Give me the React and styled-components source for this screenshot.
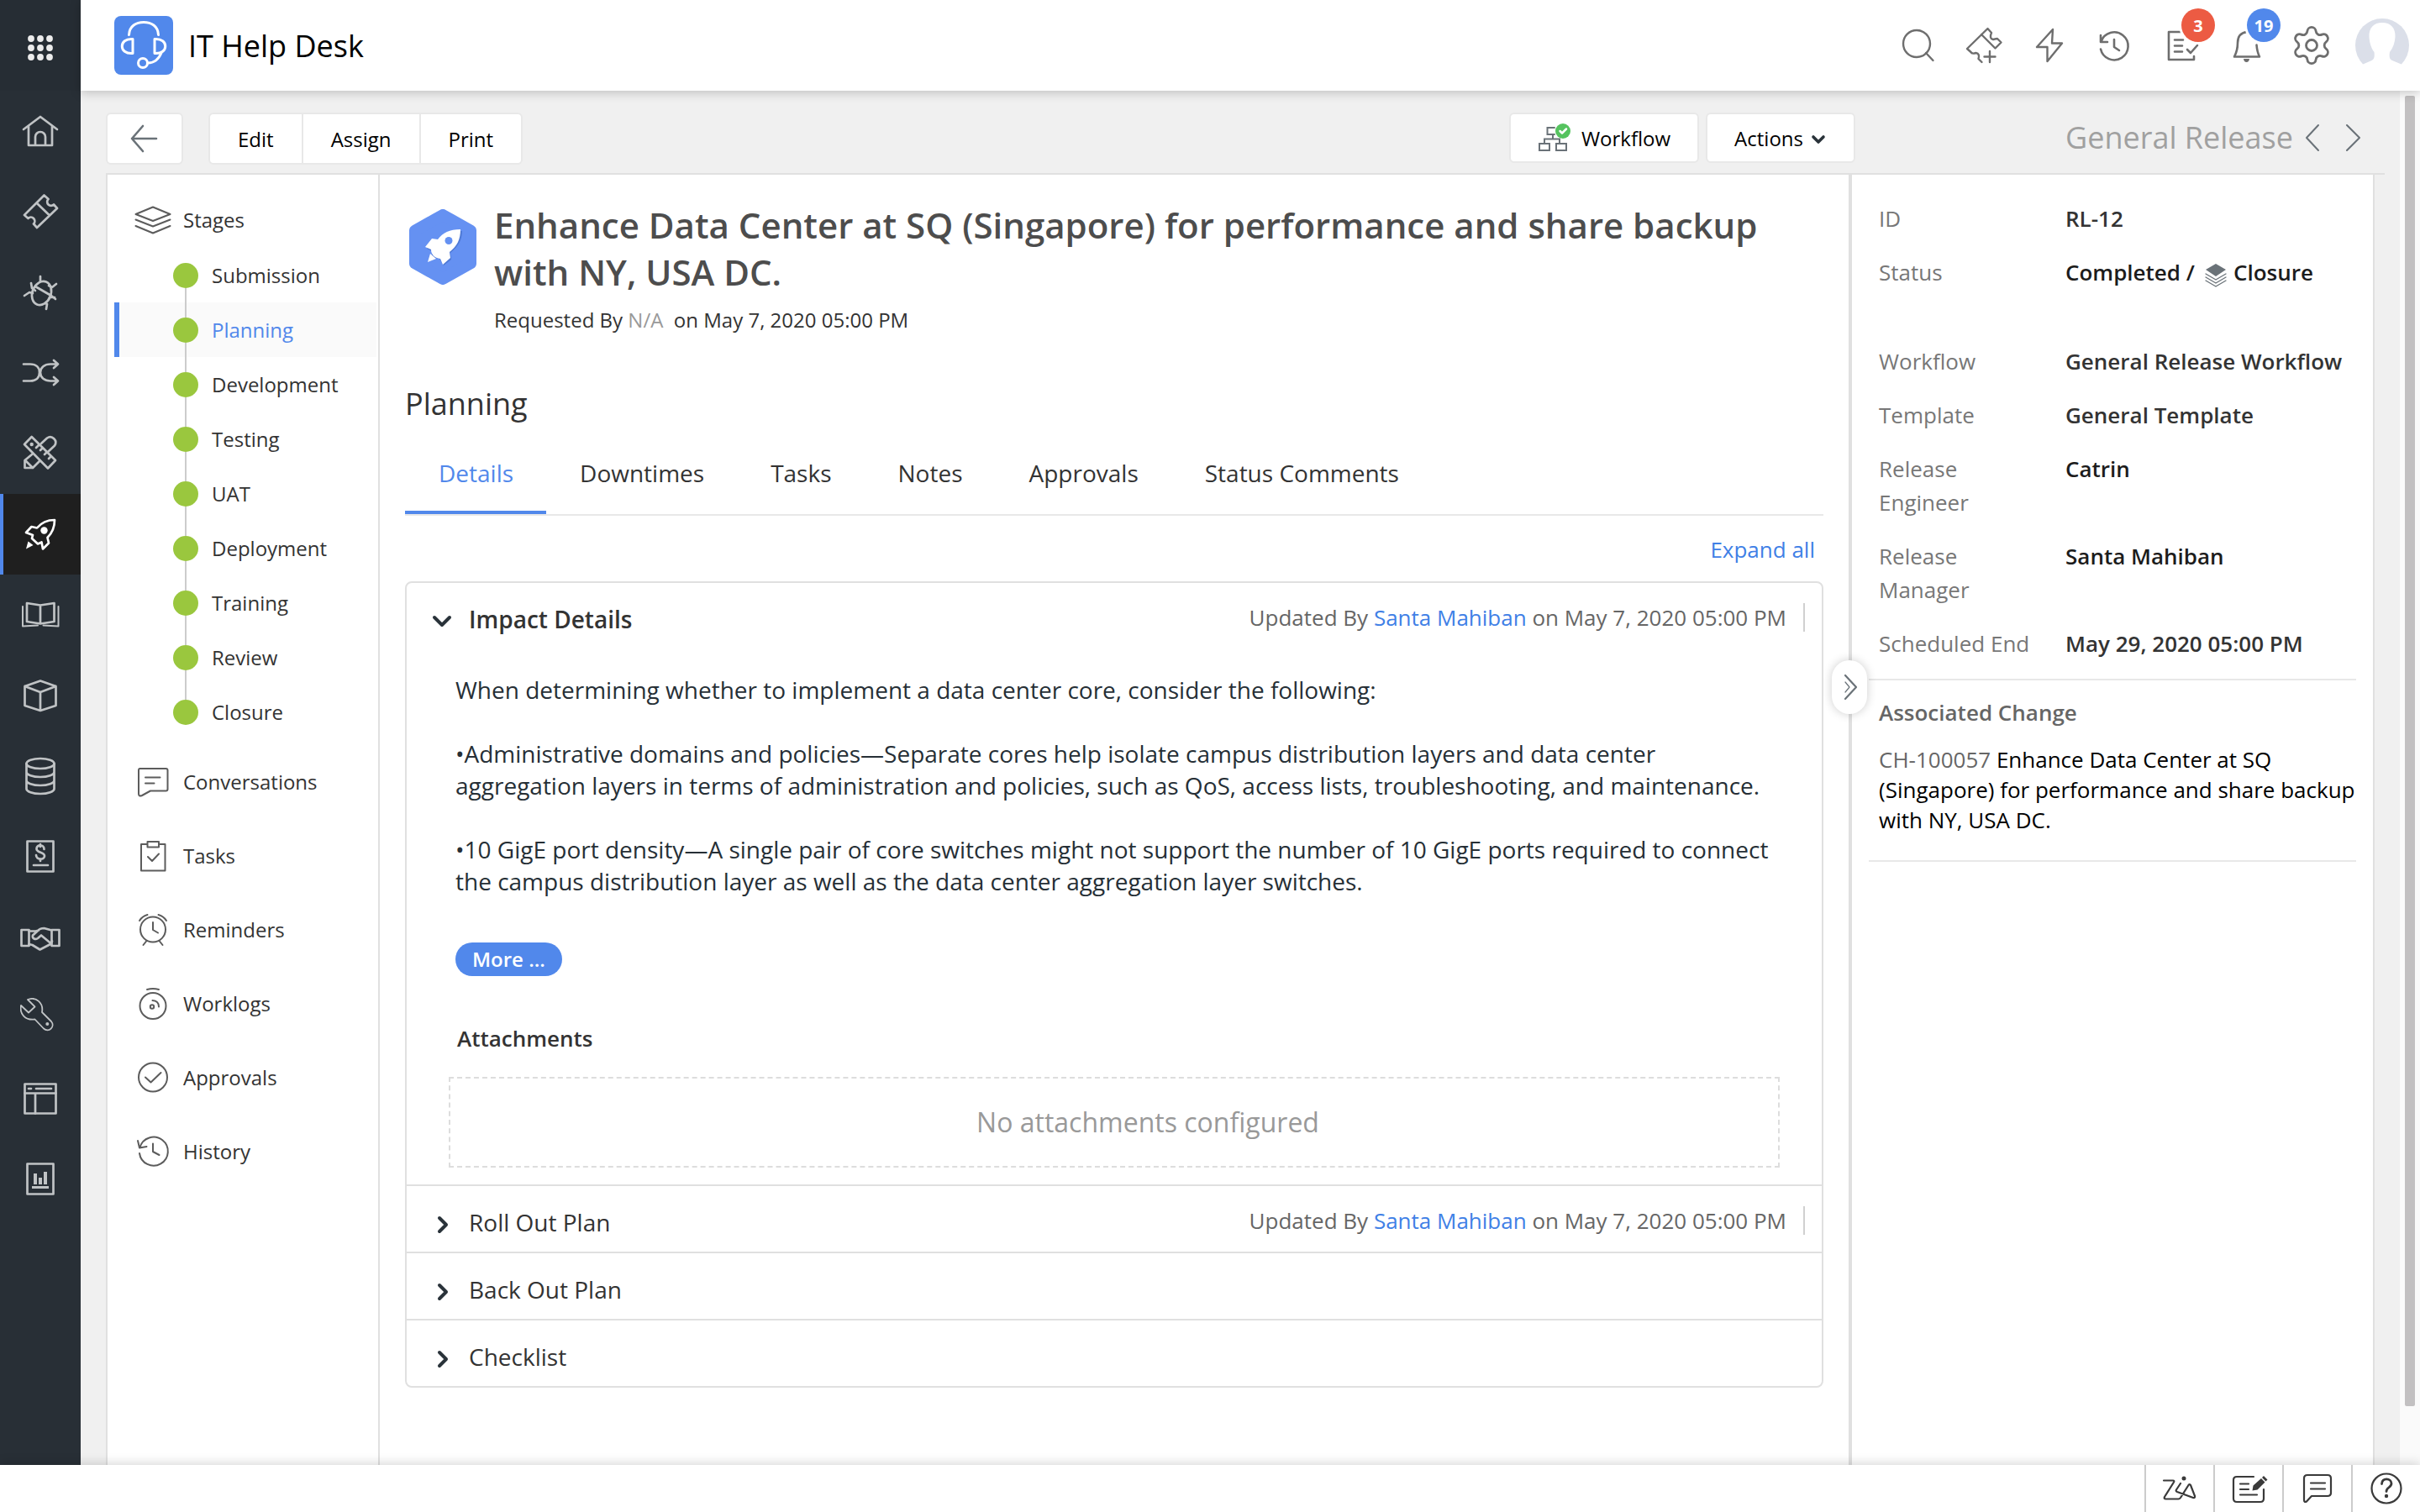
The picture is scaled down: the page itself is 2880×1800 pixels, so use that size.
import React from 'react';
import styled, { createGlobalStyle } from 'styled-components';
import { Settings } from 'lucide-react';

const GlobalStyle = createGlobalStyle`
  * {
    box-sizing: border-box;
  }

  body {
    margin: 0;
    background: #f0f0f0;
    color: #333;
    font-family: 'Open Sans', 'Noto Sans', sans-serif;
    font-size: 24px;
  }

  h1, h2, h3, p, ul, dl, dd {
    margin: 0;
    padding: 0;
  }

  ul {
    list-style: none;
  }

  a {
    color: inherit;
    text-decoration: none;
  }

  button {
    margin: 0;
    padding: 0;
    border: 0;
    background: none;
    color: inherit;
    font: inherit;
    cursor: pointer;
  }
`;

const Page = styled.div`
  display: flex;
  flex-direction: column;
  min-height: 100vh;
`;

const Body = styled.div`
  flex: 1;
  display: flex;
`;

const Svg = styled.svg`
  display: block;
  flex: none;
  fill: none;
  stroke: currentColor;
  stroke-width: ${props => props.$weight || 2};
  stroke-linecap: round;
  stroke-linejoin: round;

  .solid {
    fill: currentColor;
    stroke: none;
  }
`;

const Icon = ({ w = 48, h = 48, weight, children }) => (
  <Svg width={w} height={h} viewBox={`0 0 ${w} ${h}`} $weight={weight} aria-hidden="true">
    {children}
  </Svg>
);

/* left rail */

const Rail = styled.nav`
  width: 96px;
  flex: none;
  background: #282f36;
`;

const AppsButton = styled.button`
  display: flex;
  align-items: center;
  justify-content: center;
  width: 100%;
  height: 108px;
  padding-top: 6px;
  background: #262d34;
  color: #ececec;
`;

const RailLink = styled.a`
  display: flex;
  align-items: center;
  justify-content: center;
  height: 96px;
  color: ${props => (props.$active ? '#fff' : '#c0c3c5')};
  background: ${props => (props.$active ? '#1f1f1f' : 'transparent')};
  box-shadow: ${props => (props.$active ? 'inset 4px 0 0 #5188eb' : 'none')};
`;

const railIcons = [
  {
    label: 'Home',
    art: <path d="M4 22L24 7l20 15M10 18v23h28V18M18 41V31a6 6 0 0 1 12 0v10" />
  },
  {
    label: 'Requests',
    art: (
      <path d="M28.5 4.5L5 28l4.5 4a4.5 4.5 0 0 1 6.5 6.5l4 4.5 24-23-4-4.5a4.5 4.5 0 0 1-6.5-6.5zM20 14l14.500 14" />
    )
  },
  {
    label: 'Problems',
    art: (
      <>
        <ellipse cx="25.500" cy="25" rx="11" ry="14.500" transform="rotate(22 25.5 25)" />
        <path d="M18 17l19 11M24 5v6M13 13l1 6 4 3M5 28l6-4 4 1M43 14l-5 4-4-2M41 30h-6M42 32l-5-4M31 44l1-6-2-1" />
      </>
    )
  },
  {
    label: 'Changes',
    art: (
      <path d="M4 13.500h8c7 0 11 4 11 10s-4 10-11 10H4M45 13.500h-9c-7 0-12 4-12 10s5 10 12 10h9M40 9l5 4.500-5 4.500M40 29l5 4.500-5 4.500" />
    )
  },
  {
    label: 'Projects',
    art: (
      <>
        <path d="M13.700 4L5 13l28 28.500 9-9.500zM24 20l3-3M29 25l3-3M34 30l3-3M19 17l3-3" />
        <path d="M25 12l7-6.500c6-4 13 3 9 9L33 22M14 25L5.500 32v9H15l8-8M6 32l9 9" />
        <circle className="solid" cx="13.700" cy="13" r="2.200" />
      </>
    )
  },
  {
    label: 'Releases',
    active: true,
    art: (
      <>
        <path d="M41 7c-9 0-16 3.500-21 9.500l-6.500-1.500-6.500 7 8 3-1 4 7 6.500 4.500-2 1.500 8 7-7-1.500-6.500C38 22.500 41 16 41 7z" />
        <circle className="solid" cx="28.500" cy="19.500" r="4.200" />
        <path className="solid" d="M9.500 32.500l6 4.500-8.500 4.500z" />
      </>
    )
  },
  {
    label: 'Solutions',
    art: (
      <>
        <path d="M8 10l16 2.500L40.500 10v22L24 34.500 8 32zM24 12.500v22" />
        <path strokeWidth="2" d="M3 14v23.500l18-1M45.500 14v23.500l-18-1" />
      </>
    )
  },
  {
    label: 'Assets',
    art: <path d="M24 6.500L5.500 13v23L24 42l18.500-6V13zM5.500 13L24 20l18.500-7M24 20v22" />
  },
  {
    label: 'CMDB',
    art: (
      <>
        <ellipse cx="24" cy="9" rx="16.500" ry="6" />
        <path d="M7.500 9v30c0 3.300 7.400 6 16.500 6s16.500-2.700 16.500-6V9M7.500 19c0 3.300 7.400 6 16.500 6s16.500-2.700 16.500-6M7.500 29c0 3.300 7.400 6 16.500 6s16.500-2.700 16.500-6" />
      </>
    )
  },
  {
    label: 'Purchase',
    art: (
      <>
        <rect x="8.500" y="5.500" width="31" height="36" />
        <path d="M28.500 15c0-6-9-6-9-.5 0 5 9.500 3.500 9.500 8.500s-10 5-10-1M24 9v3M24 26.500v2.500M16 34h17" />
      </>
    )
  },
  {
    label: 'Contracts',
    art: (
      <>
        <path d="M1.500 15h9v19h-9zM37.500 15h9v19h-9z" />
        <path d="M10.500 16.500h8l3.500-1M37.500 15.500l-9-2.500c-4 0-6 1-8 3.500l-5.500 5c-1 4 3 5.500 6 3.500l4-3.500 11.500 9.500M10.500 32l4 1 9 5.500 12.500-6.500 2-3.500" />
      </>
    )
  },
  {
    label: 'Maintenance',
    art: (
      <>
        <path
          strokeWidth="1.800"
          d="M9 2c10-4 19 4 17 15l11 11c5 6-3 14-9 8.500L17.500 25.500C6 27-1 19 1 9l9 8.500 7.500-7z"
        />
        <circle className="solid" cx="32.300" cy="31" r="2" />
      </>
    )
  },
  {
    label: 'Admin',
    art: (
      <>
        <rect x="5.500" y="6.500" width="37" height="35" />
        <path d="M5.500 17.500h37M18 17.500v24M10 12h3M19 12h18" />
      </>
    )
  },
  {
    label: 'Reports',
    art: (
      <>
        <rect x="8.500" y="5.500" width="31" height="36" />
        <path className="solid" d="M16 17h4v13h-4zM22 22h4v8h-4zM28 15h4v15h-4zM14 32h20v3H14z" />
      </>
    )
  }
];

/* header */

const Main = styled.div`
  flex: 1;
  min-width: 0;
  display: flex;
  flex-direction: column;
`;

const Header = styled.header`
  position: relative;
  z-index: 2;
  display: flex;
  align-items: center;
  height: 108px;
  padding: 0 12px 0 40px;
  background: #fff;
  box-shadow: 0 2px 12px rgba(0, 0, 0, 0.22);
`;

const Logo = styled.div`
  width: 70px;
  height: 70px;
  border-radius: 8px;
  background: #5188eb;
  color: #fff;
`;

const AppName = styled.div`
  flex: 1;
  margin-left: 18px;
  padding-top: 2px;
  color: #000;
  font-size: 36px;
  line-height: 48px;
`;

const HeaderButton = styled.button`
  position: relative;
  display: flex;
  align-items: center;
  justify-content: center;
  width: 78px;
  height: 78px;
  color: #6e6e6e;
`;

const Badge = styled.span`
  position: absolute;
  top: -5px;
  right: -2px;
  width: 40px;
  height: 40px;
  border-radius: 50%;
  background: ${props => props.$color};
  box-shadow: 0 0 0 3px #fff;
  color: #fff;
  font-size: 20px;
  font-weight: 700;
  line-height: 42px;
  text-align: center;
`;

const Avatar = styled.button`
  margin-left: 12px;
  border-radius: 50%;
`;

/* workspace */

const Scroller = styled.div`
  flex: 1;
  display: flex;
`;

const ScrollTrack = styled.div`
  width: 24px;
  flex: none;
  padding: 6px;
  background: #fafafa;
`;

const ScrollThumb = styled.div`
  height: calc(100% - 64px);
  border-radius: 2px;
  background: #c2c0c1;
`;

const Workspace = styled.main`
  flex: 1;
  min-width: 0;
  display: flex;
  flex-direction: column;
  padding: 0 18px 0 30px;
`;

const Toolbar = styled.div`
  display: flex;
  height: 100px;
  padding-top: 26px;
  border-bottom: 2px solid #e0e0e0;
  color: #000;
`;

const ToolButton = styled.button`
  display: flex;
  align-items: center;
  height: 62px;
  padding: 0 33px;
  border: 2px solid #e8e8e8;
  border-radius: 6px;
  background: #fff;
`;

const BackButton = styled(ToolButton)`
  justify-content: center;
  width: 92px;
  padding: 0;
  color: #6a7278;
`;

const ButtonGroup = styled.div`
  display: flex;
  margin-left: 30px;

  ${ToolButton} + ${ToolButton} {
    border-left: 0;
  }

  ${ToolButton}:not(:first-child) {
    border-top-left-radius: 0;
    border-bottom-left-radius: 0;
  }

  ${ToolButton}:not(:last-child) {
    border-top-right-radius: 0;
    border-bottom-right-radius: 0;
  }
`;

const RecordTools = styled.div`
  flex: 1;
  display: flex;
  justify-content: flex-end;
  gap: 8px;
  margin-right: 30px;

  ${ToolButton} {
    height: 60px;
    padding: 0 32px;
  }
`;

const ButtonIcon = styled.span`
  margin-right: 12px;
  color: #6a7278;
`;

const Caret = styled.span`
  margin-left: 8px;
  color: #2a333a;
`;

const Pager = styled.div`
  display: flex;
  align-items: center;
  gap: 10px;
  width: 600px;
  height: 60px;
  padding-left: 220px;
  color: #a0a0a0;
  font-size: 36px;
  line-height: 48px;
`;

const PagerButton = styled.button`
  color: #6a7278;
`;

const Panels = styled.div`
  flex: 1;
  display: flex;
  margin-right: 12px;
  border: solid #e0e0e0;
  border-width: 0 2px;
  background: #fff;
`;

const StagePanel = styled.nav`
  width: 324px;
  flex: none;
  padding-top: 20px;
  border-right: 2px solid #e0e0e0;
`;

const NavLink = styled.a`
  display: flex;
  align-items: center;
  gap: 14px;
  height: ${props => (props.$head ? 67 : 88)}px;
  padding-left: 32px;

  svg {
    color: #5c5c5c;
  }
`;

const StageList = styled.ul`
  margin: 0 2px 6px 8px;
`;

const StageDot = styled.span`
  position: relative;
  width: 30px;
  height: 30px;
  border-radius: 50%;
  background: #9ac73e;
`;

const StageLink = styled.a`
  display: flex;
  align-items: center;
  gap: 16px;
  height: 65px;
  padding-left: 64px;
  border-left: 6px solid ${props => (props.$active ? '#5188eb' : 'transparent')};
  background: ${props => (props.$active ? '#fafafa' : 'transparent')};
  color: ${props => (props.$active ? '#5188eb' : '#333')};

  li:not(:last-child) & ${StageDot}::after {
    content: '';
    position: absolute;
    top: 30px;
    left: 14px;
    width: 2px;
    height: 35px;
    background: #ccc;
  }
`;

const stages = [
  'Submission',
  'Planning',
  'Development',
  'Testing',
  'UAT',
  'Deployment',
  'Training',
  'Review',
  'Closure'
];

const links = [
  {
    label: 'Conversations',
    art: (
      <path d="M6.500 7h31q2 0 2 2v22.500q0 2-2 2H19l-10 5.500q-4 1.500-4-2V9q0-2 1.500-2zM13 17.500h17.500M13 24.500h10.500" />
    )
  },
  {
    label: 'Tasks',
    art: <path d="M15.500 9H8v31.500h28.500V9H29M15.500 6H29v6.500H15.500zM16 24l5 5 8-8.500" />
  },
  {
    label: 'Reminders',
    art: (
      <>
        <circle cx="22" cy="22.500" r="15" />
        <path d="M22 14v9l6 3.500M6 12q3-5 9.500-7M38 12q-3-5-9.500-7M14.500 36l-4 5M29.500 36l4 5" />
      </>
    )
  },
  {
    label: 'Worklogs',
    art: (
      <>
        <circle cx="22" cy="25.500" r="15.500" />
        <circle cx="21" cy="26.500" r="2.200" />
        <path d="M15 6q7-2 14 0M21.500 19q7.500.5 7.500 7.500" />
      </>
    )
  },
  {
    label: 'Approvals',
    art: (
      <>
        <circle cx="22" cy="22.500" r="17" />
        <path d="M13 22.500l6.500 6L31.500 17" />
      </>
    )
  },
  {
    label: 'History',
    art: <path d="M6.500 18a17 17 0 1 1-.5 7M4 10l2 8.500 8.500-1.500M22 13.500v9.500l7.500 4" />
  }
];

/* release record */

const Content = styled.section`
  flex: 1;
  min-width: 0;
  padding: 32px 30px 0;
`;

const RecordHead = styled.div`
  display: flex;
  gap: 21px;
  margin-bottom: 60px;
  padding-left: 5px;
`;

const HexIcon = styled.div`
  flex: none;
  padding-top: 9px;
`;

const Title = styled.h1`
  margin-bottom: 13px;
  color: #4d4d4d;
  font-size: 42px;
  font-weight: 600;
  line-height: 56px;
`;

const Requested = styled.p`
  line-height: 32px;
  white-space: pre-wrap;
`;

const Muted = styled.span`
  color: ${props => props.$tone || '#999'};
`;

const StageTitle = styled.h2`
  font-size: 36px;
  font-weight: 400;
  line-height: 48px;
`;

const Tabs = styled.div`
  display: flex;
  border-bottom: 2px solid #e8e8e8;
`;

const Tab = styled.button`
  padding: 39px 39px 26px 40px;
  border-bottom: 4px solid ${props => (props.$active ? '#5188eb' : 'transparent')};
  color: ${props => (props.$active ? '#5188eb' : '#333')};
  font-size: 28px;
  line-height: 38px;
`;

const ExpandAll = styled.button`
  display: block;
  margin: 22px 10px 20px auto;
  color: #4080e6;
  font-size: 26px;
  line-height: 36px;
`;

const Card = styled.div`
  border: 2px solid #e0e0e0;
  border-radius: 8px;
`;

const SectionHead = styled.div`
  display: flex;
  align-items: flex-start;
  padding: 24px 20px 16px 28px;

  * + & {
    border-top: 2px solid #e0e0e0;
  }
`;

const SectionToggle = styled.button`
  display: flex;
  gap: 18px;
  color: #333;
  font-size: 28px;
  font-weight: ${props => (props.$open ? 600 : 400)};
  line-height: 38px;

  svg {
    color: #2a333a;
  }
`;

const Updated = styled.p`
  margin-left: auto;
  padding-right: 20px;
  border-right: 2px solid #d0d0d0;
  color: #666;
  font-size: 26px;
  line-height: 34px;

  a {
    color: #4080e6;
  }
`;

const SectionBody = styled.div`
  padding: 30px 50px 20px;
`;

const Copy = styled.div`
  display: flex;
  flex-direction: column;
  gap: 38px;
  padding-left: 8px;
  color: #262f36;
  font-size: 28px;
  line-height: 38px;
`;

const MoreButton = styled.button`
  height: 40px;
  margin: 54px 0 56px 8px;
  padding: 0 20px;
  border-radius: 20px;
  background: #5188eb;
  color: #fff;
  font-weight: 600;
  line-height: 40px;
`;

const AttachmentsTitle = styled.h3`
  padding-left: 10px;
  margin-bottom: 28px;
  font-size: 26px;
  font-weight: 600;
  line-height: 36px;
`;

const DropZone = styled.div`
  padding: 32px 0 32px 80px;
  border: 2px dashed #ddd;
  color: #999;
  font-size: 32px;
  line-height: 40px;
  text-align: center;
`;

/* properties */

const Properties = styled.aside`
  position: relative;
  width: 624px;
  flex: none;
  padding: 32px 20px 0;
  border-left: 4px solid #e0e0e0;
  font-size: 26px;
`;

const CollapseButton = styled.button`
  position: absolute;
  top: 578px;
  left: -24px;
  display: flex;
  align-items: center;
  justify-content: center;
  width: 42px;
  height: 64px;
  border-radius: 21px;
  background: #fff;
  box-shadow: 0 0 12px rgba(0, 0, 0, 0.2);
  color: #6a7278;
`;

const Fields = styled.dl`
  display: grid;
  row-gap: 24px;
  padding: 0 0 22px 12px;
  border-bottom: 2px solid #e8e8e8;
  line-height: 40px;
`;

const Field = styled.div`
  display: grid;
  grid-template-columns: 190px 1fr;
  column-gap: 32px;
  min-height: ${props => (props.$tall ? 82 : 40)}px;

  dt {
    color: #777;
  }

  dd {
    display: flex;
    align-items: flex-start;
    font-weight: 600;
    color: ${props => (props.$strong ? '#1c1c1c' : '#333')};
  }

  svg {
    margin: 8px 8px 0 12px;
    color: #6a7278;
  }
`;

const Change = styled.div`
  margin-right: -6px;
  padding: 20px 0 30px 12px;
  line-height: 36px;
  color: #000;
`;

const ChangeTitle = styled.h3`
  margin-bottom: 20px;
  color: #666;
  font-size: 26px;
  font-weight: 600;
  line-height: 36px;
`;

const Rule = styled.hr`
  margin: 0;
  border: 0;
  border-top: 2px solid #e8e8e8;
`;

const fields = [
  { label: 'ID', value: 'RL-12' },
  {
    label: 'Status',
    tall: true,
    strong: true,
    value: (
      <>
        Completed /
        <Icon w={26} h={30} weight={2}>
          <path className="solid" d="M13 2l12 7-12 8L1 9z" />
          <path d="M1 14l12 7 12-7M1 18l12 7 12-7M1 22l12 7 12-7" strokeWidth="1.300" />
        </Icon>
        Closure
      </>
    )
  },
  { label: 'Workflow', value: 'General Release Workflow' },
  { label: 'Template', value: 'General Template' },
  { label: 'Release Engineer', value: 'Catrin', strong: true },
  { label: 'Release Manager', value: 'Santa Mahiban', strong: true },
  { label: 'Scheduled End', value: 'May 29, 2020 05:00 PM' }
];

/* footer */

const Footer = styled.footer`
  position: relative;
  z-index: 3;
  display: flex;
  justify-content: flex-end;
  height: 56px;
  background: #fff;
  box-shadow: 0 -2px 12px rgba(0, 0, 0, 0.16);
`;

const FooterButton = styled.button`
  display: flex;
  align-items: center;
  justify-content: center;
  width: 82px;
  border-left: 2px solid #ccc;
  color: #3a3a3a;
`;

const LastUpdate = () => (
  <Updated>
    Updated By <a href="#user">Santa Mahiban</a> on May 7, 2020 05:00 PM
  </Updated>
);

const Section = ({ title, open, updated }) => (
  <SectionHead>
    <SectionToggle $open={open} aria-expanded={Boolean(open)}>
      <Icon w={28} h={38} weight={4}>
        <path d={open ? 'M5 17l9 9 9-9' : 'M11 14l8 8-8 8'} />
      </Icon>
      {title}
    </SectionToggle>
    {updated && <LastUpdate />}
  </SectionHead>
);

const TopBar = () => (
  <Header>
    <Logo>
      <Icon w={70} h={70} weight={3}>
        <path d="M17.500 22.500C18 12 26 7.500 35 7.500S52 12 52.500 22.500" />
        <path d="M22 27.500v17C5 46 5 26 22 27.500zM48 27.500v17C65 46 65 26 48 27.500z" />
        <path d="M56 44c-3 7-8 12-16 12" />
        <circle cx="34" cy="56" r="5.500" />
      </Icon>
    </Logo>
    <AppName>IT Help Desk</AppName>
    <HeaderButton aria-label="Search">
      <Icon weight={2.4}>
        <circle cx="22" cy="22" r="16" />
        <path d="M33 33l8.500 9" />
      </Icon>
    </HeaderButton>
    <HeaderButton aria-label="New request">
      <Icon weight={2.4}>
        <path d="M21.500 44l-4-4q2-6-3-7-5 1.500-6-1L4 28 28.500 4l4.500 5q-3 7 2 8 4-1 5-1l4.500 4.500-7 7L21 11M31 31v13M24.500 37.500h13" />
      </Icon>
    </HeaderButton>
    <HeaderButton aria-label="Quick actions">
      <Icon weight={2.4}>
        <path d="M28 5L9 26h12.500v17L39 21.500H27z" />
      </Icon>
    </HeaderButton>
    <HeaderButton aria-label="Recent items">
      <Icon weight={2.6}>
        <path d="M7.500 19.500a16.500 16.500 0 1 1-.5 9M7 12v8h8M23 17v9l6 4" />
      </Icon>
    </HeaderButton>
    <HeaderButton aria-label="My tasks">
      <Icon weight={2.6}>
        <path d="M26 8H10v33h30v-4M17 17.500h10M17 24.500h9M17 31.500h9M32 29l4 4 8-9" />
      </Icon>
      <Badge $color="#ec5b43">3</Badge>
    </HeaderButton>
    <HeaderButton aria-label="Notifications">
      <Icon weight={2.6}>
        <path d="M25 8c-8 1-11 6-11 13 0 6-1 11-4 16.500h30c-2-4-3-8-3.500-14" />
        <path className="solid" d="M21 40h7q-.5 4-3.500 4T21 40z" />
      </Icon>
      <Badge $color="#5188eb">19</Badge>
    </HeaderButton>
    <HeaderButton aria-label="Settings">
      <Settings size={52} strokeWidth={1.3} />
    </HeaderButton>
    <Avatar aria-label="Account">
      <Icon w={66} h={66}>
        <circle cx="33" cy="33" r="32" fill="#dbdfe9" stroke="none" />
        <path
          fill="#fff"
          stroke="none"
          d="M33 6c-10 0-16 6-15.500 17 .5 8 3 14 6 18 1 7-1 9-3 10L9 56v10h48V56l-12-5c-3-1-4-4-3-10 4-5 6-11 6.500-18C49 12 43 6 33 6z"
        />
      </Icon>
    </Avatar>
  </Header>
);

const App = () => (
  <Page>
    <GlobalStyle />
    <Body>
      <Rail aria-label="Modules">
        <AppsButton aria-label="Apps">
          <Icon>
            {[13, 24, 35].map(y =>
              [13, 24, 35].map(x => (
                <circle key={`${x}-${y}`} className="solid" cx={x} cy={y} r="3.900" />
              ))
            )}
          </Icon>
        </AppsButton>
        {railIcons.map(item => (
          <RailLink key={item.label} href="#module" aria-label={item.label} $active={item.active}>
            <Icon weight={2.7}>{item.art}</Icon>
          </RailLink>
        ))}
      </Rail>
      <Main>
        <TopBar />
        <Scroller>
          <Workspace>
            <Toolbar>
              <BackButton aria-label="Back">
                <Icon w={36} h={36} weight={2.6}>
                  <path d="M32 18H3M16 3L3 18l13 15" />
                </Icon>
              </BackButton>
              <ButtonGroup>
                <ToolButton>Edit</ToolButton>
                <ToolButton>Assign</ToolButton>
                <ToolButton>Print</ToolButton>
              </ButtonGroup>
              <RecordTools>
                <ToolButton>
                  <ButtonIcon>
                    <Icon w={40} h={36}>
                      <path
                        strokeLinejoin="miter"
                        d="M20 6h-8.500v8H20M18 14v5M8 25v-5.500h18V25M2 25h12v8H2zM22 25h12v8H22z"
                      />
                      <circle cx="30" cy="10" r="9" fill="#55c35f" stroke="none" />
                      <path d="M26.500 10l2.500 2.500 5-5" stroke="#fff" strokeWidth="2.500" />
                    </Icon>
                  </ButtonIcon>
                  Workflow
                </ToolButton>
                <ToolButton>
                  Actions
                  <Caret>
                    <Icon w={20} h={20} weight={3.6}>
                      <path d="M4 9l6 6 6-6" />
                    </Icon>
                  </Caret>
                </ToolButton>
              </RecordTools>
              <Pager>
                General Release
                <PagerButton aria-label="Previous release">
                  <Icon w={28} h={36}>
                    <path d="M20 3L6 18l14 15" />
                  </Icon>
                </PagerButton>
                <PagerButton aria-label="Next release">
                  <Icon w={48} h={36}>
                    <path d="M16 3l15 15-15 15" />
                  </Icon>
                </PagerButton>
              </Pager>
            </Toolbar>
            <Panels>
              <StagePanel aria-label="Release">
                <NavLink href="#stages" $head>
                  <Icon w={44} h={44} weight={2}>
                    <path d="M22 6.500L42.500 15 22 23 1.500 15zM1.500 21.500l20.500 8 20.500-8M1.500 29L22 37.500 42.500 29" />
                  </Icon>
                  Stages
                </NavLink>
                <StageList>
                  {stages.map(stage => (
                    <li key={stage}>
                      <StageLink href="#stage" $active={stage === 'Planning'}>
                        <StageDot />
                        {stage}
                      </StageLink>
                    </li>
                  ))}
                </StageList>
                {links.map(link => (
                  <NavLink key={link.label} href="#section">
                    <Icon w={44} h={44} weight={2}>
                      {link.art}
                    </Icon>
                    {link.label}
                  </NavLink>
                ))}
              </StagePanel>
              <Content>
                <RecordHead>
                  <HexIcon>
                    <Icon w={80} h={90}>
                      <path
                        d="M40 7L73 25.500v39L40 83 7 64.500v-39z"
                        fill="#6591f2"
                        stroke="#6591f2"
                        strokeWidth="14"
                      />
                      <path
                        fill="#4f7ad6"
                        stroke="none"
                        d="M63 26c-13 0-21 4-27 12l-7-1-8 10 6 3v7l9 2 5 8 9-7-1-8c9-7 14-15 14-26z"
                      />
                      <path
                        fill="#fff"
                        stroke="none"
                        d="M61 24c-13 0-21 4-27 12l-7-1-8 10 7 3c0 6 4 10 11 11l3 7 9-8-1-7c9-7 13-15 13-27z"
                      />
                      <circle cx="47" cy="37.500" r="4.500" fill="#6591f2" stroke="none" />
                      <path fill="#fff" stroke="none" d="M25 53l7 6-10 4z" />
                    </Icon>
                  </HexIcon>
                  <div>
                    <Title>
                      Enhance Data Center at SQ (Singapore) for performance and share backup with
                      NY, USA DC.
                    </Title>
                    <Requested>
                      Requested By <Muted>N/A</Muted>
                      {'  on May 7, 2020 05:00 PM'}
                    </Requested>
                  </div>
                </RecordHead>
                <StageTitle>Planning</StageTitle>
                <Tabs>
                  <Tab $active>Details</Tab>
                  <Tab>Downtimes</Tab>
                  <Tab>Tasks</Tab>
                  <Tab>Notes</Tab>
                  <Tab>Approvals</Tab>
                  <Tab>Status Comments</Tab>
                </Tabs>
                <ExpandAll>Expand all</ExpandAll>
                <Card>
                  <Section title="Impact Details" open updated />
                  <SectionBody>
                    <Copy>
                      <p>
                        When determining whether to implement a data center core, consider the
                        following:
                      </p>
                      <p>
                        •Administrative domains and policies—Separate cores help isolate campus
                        distribution layers and data center aggregation layers in terms of
                        administration and policies, such as QoS, access lists, troubleshooting, and
                        maintenance.
                      </p>
                      <p>
                        •10 GigE port density—A single pair of core switches might not support the
                        number of 10 GigE ports required to connect the campus distribution layer as
                        well as the data center aggregation layer switches.
                      </p>
                    </Copy>
                    <MoreButton>More ...</MoreButton>
                    <AttachmentsTitle>Attachments</AttachmentsTitle>
                    <DropZone>No attachments configured</DropZone>
                  </SectionBody>
                  <Section title="Roll Out Plan" updated />
                  <Section title="Back Out Plan" />
                  <Section title="Checklist" />
                </Card>
              </Content>
              <Properties>
                <CollapseButton aria-label="Collapse panel">
                  <Icon w={26} h={36} weight={2.2}>
                    <path d="M8 4l13 14L8 32" />
                    <path d="M8 12l5 6-5 6" strokeWidth="1.200" />
                  </Icon>
                </CollapseButton>
                <Fields>
                  {fields.map(field => (
                    <Field key={field.label} $tall={field.tall} $strong={field.strong}>
                      <dt>{field.label}</dt>
                      <dd>{field.value}</dd>
                    </Field>
                  ))}
                </Fields>
                <Change>
                  <ChangeTitle>Associated Change</ChangeTitle>
                  <a href="#change">
                    <Muted $tone="#666">CH-100057</Muted> Enhance Data Center at SQ (Singapore) for
                    performance and share backup with NY, USA DC.
                  </a>
                </Change>
                <Rule />
              </Properties>
            </Panels>
          </Workspace>
          <ScrollTrack>
            <ScrollThumb />
          </ScrollTrack>
        </Scroller>
      </Main>
    </Body>
    <Footer>
      <FooterButton aria-label="Zia">
        <Icon weight={2.2}>
          <path d="M5 14.500h11q2 0 1 2L6 34q-1 2.500 1.500 2.500h15q1.500 0 2.500-1.500l9.500-15q1.500-2 2.500 0l5 13q.5 2.500-2 2L21 28q-2-1-1-2.500l5-7.500" />
          <circle className="solid" cx="29" cy="12" r="2.500" />
        </Icon>
      </FooterButton>
      <FooterButton aria-label="Notes">
        <Icon weight={2.2}>
          <path d="M30 10H10q-4 0-4 4v22q0 4 4 4h28q4 0 4-4V25M14 18.500h10M14 25h10M14 31.500h20" />
          <path className="solid" d="M28.500 26.500l1-6L39 12l4.500 4.500-9 9zM40 11l2-2 4.500 4.500-2 2z" />
        </Icon>
      </FooterButton>
      <FooterButton aria-label="Chat">
        <Icon weight={2.2}>
          <path d="M12 8h24q4 0 4 4v17q0 4-4 4H17l-6 6.500q-3 1.500-3-2V12q0-4 4-4zM16 17.500h17M16 24.500h17" />
        </Icon>
      </FooterButton>
      <FooterButton aria-label="Help">
        <Icon weight={2.2}>
          <circle cx="24" cy="24" r="17.500" />
          <path d="M18.500 18.500c0-8 11.500-7 11.500-.5 0 5-6 4.500-6 9.500" strokeWidth="2.800" />
          <circle className="solid" cx="24" cy="33" r="2.200" />
        </Icon>
      </FooterButton>
    </Footer>
  </Page>
);

export default App;
